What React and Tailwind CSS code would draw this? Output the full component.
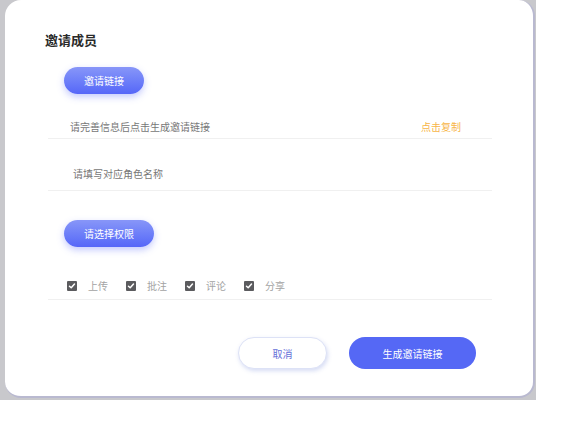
const perms = ['上传', '批注', '评论', '分享'];

const CheckIcon = () => (
  <span className="flex h-[10px] w-[10px] items-center justify-center rounded-[1px] bg-[#5b5b5e]">
    <svg width="8" height="8" viewBox="0 0 8 8" fill="none">
      <path d="M1.5 4.2 L3.2 5.8 L6.5 2" stroke="#fff" strokeWidth="1.5" strokeLinecap="round" strokeLinejoin="round" />
    </svg>
  </span>
);

const GradientButton = ({ children, width }) => (
  <button
    className={`ml-[59px] flex h-[27px] ${width} items-center justify-center rounded-full bg-gradient-to-b from-[#8896f8] to-[#5666f8] text-[10px] text-white shadow-[0_3px_7px_rgba(86,102,248,0.35)]`}
  >
    {children}
  </button>
);

const App = () => {
  return (
    <div
      className="h-[438px] w-[585px] bg-white"
      style={{ fontFamily: '"Noto Sans CJK SC", "Noto Sans", sans-serif' }}
    >
      <div className="h-[400px] w-[536px] bg-[#c8c8cc]">
        <div className="ml-[5px] flex h-[398px] w-[530px] flex-col rounded-[16px] border-r-2 border-b-2 border-[#b9b9d0] bg-white">
          <h2 className="ml-[40px] mt-[31px] text-[13px] leading-[18px] font-bold text-[#2a2a2a]">邀请成员</h2>

          <div className="mt-[18px]">
            <GradientButton width="w-[80px]">邀请链接</GradientButton>
          </div>

          {/* link row */}
          <div className="ml-[43px] mt-[26px] flex w-[444px] items-end justify-between border-b border-[#f0f0f0] pb-[4px] pl-[22px] pr-[31px] text-[10px] leading-[14px]">
            <span className="text-[#777]">请完善信息后点击生成邀请链接</span>
            <span className="text-[#f7b548]">点击复制</span>
          </div>

          <div className="ml-[43px] mt-[28px] w-[444px] border-b border-[#f0f0f0] pb-[9px] pl-[25px] text-[10px] leading-[14px] text-[#777]">
            请填写对应角色名称
          </div>

          <div className="mt-[29px]">
            <GradientButton width="w-[90px]">请选择权限</GradientButton>
          </div>

          {/* permissions */}
          <div className="ml-[43px] mt-[32px] flex w-[444px] items-center gap-[18px] border-b border-[#f0f0f0] pb-[6px] pl-[19px] text-[10px] leading-[14px] text-[#a3a3a3]">
            {perms.map((p) => (
              <label key={p} className="flex items-center gap-[11px]">
                <CheckIcon />
                <span>{p}</span>
              </label>
            ))}
          </div>

          <div className="mt-[37px] flex justify-end gap-[22px] pr-[57px]">
            <button className="flex h-[32px] w-[89px] items-center justify-center rounded-full border border-[#dde2f6] bg-white text-[10px] text-[#6670d8] shadow-[1px_2px_4px_rgba(120,140,220,0.3)]">
              取消
            </button>
            <button className="flex h-[32px] w-[127px] items-center justify-center rounded-full bg-[#5568f5] text-[10px] text-white">
              生成邀请链接
            </button>
          </div>
        </div>
      </div>
    </div>
  );
};

export default App;
